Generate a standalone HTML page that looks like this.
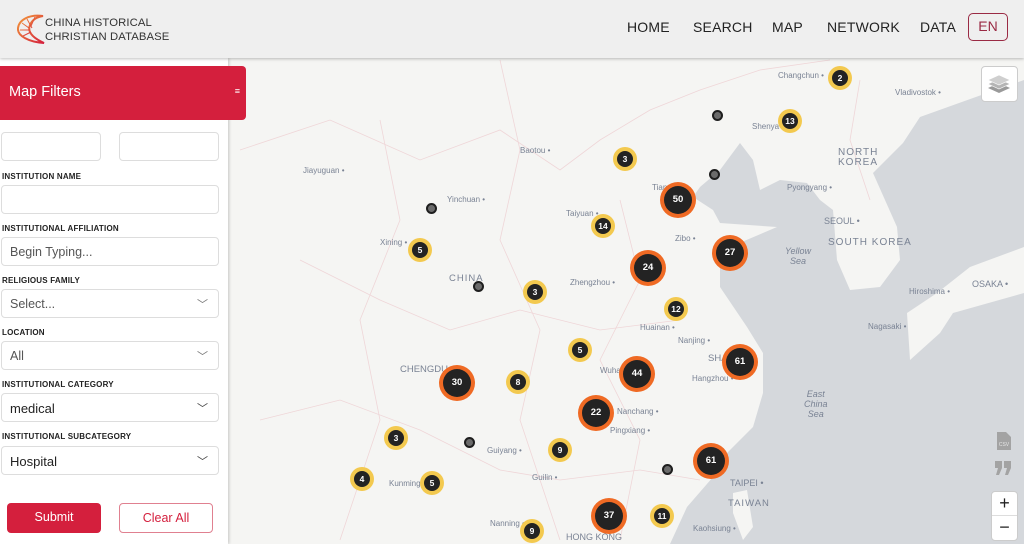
<!DOCTYPE html>
<html><head><meta charset="utf-8"><style>
*{box-sizing:border-box;margin:0;padding:0}
body{width:1024px;height:544px;overflow:hidden;font-family:"Liberation Sans",sans-serif;background:#f5f5f3;position:relative}
.top{position:absolute;left:0;top:0;width:1024px;height:58px;background:#efefef;box-shadow:0 1px 3px rgba(0,0,0,.25);z-index:5}
.logo{position:absolute;left:45px;top:16px;font-size:11.3px;line-height:14px;color:#333;letter-spacing:.1px}
.nav{position:absolute;top:19px;font-size:14px;color:#222;letter-spacing:.2px}
.en{position:absolute;left:968px;top:13px;width:40px;height:28px;border:1.5px solid #9a2a44;border-radius:5px;color:#9a2a44;font-size:14px;text-align:center;line-height:25px}
.side{position:absolute;left:0;top:58px;width:228px;height:486px;background:#fff;box-shadow:1px 0 3px rgba(0,0,0,.2);z-index:3}
.hdr{position:absolute;left:0;top:66px;width:246px;height:54px;background:#d41f3d;border-radius:0 4px 4px 0;color:#fff;font-size:14.5px;padding:18px 9px;z-index:4}
.inp{position:absolute;height:29px;border:1px solid #ddd;border-radius:4px;background:#fff;font-size:12.5px;color:#555;padding:7px 8px}
.lbl{position:absolute;left:2px;font-size:8px;font-weight:bold;color:#222;letter-spacing:.2px}
.chev{position:absolute;right:10px;top:6px;color:#777;font-size:11px}
.btn{position:absolute;top:503px;height:30px;border-radius:4px;font-size:12.5px;text-align:center;line-height:29px}
.lb{position:absolute;font-size:8px;color:#7a8394}
.m{position:absolute;border-radius:50%;color:#fff;font-size:8.5px;font-weight:bold;text-align:center}
.y{width:24px;height:24px;background:#f3c94f;padding:4px}
.o{width:36px;height:36px;background:#ef6a24;padding:4px}
.m span{display:block;width:100%;height:100%;border-radius:50%;background:#232323}
.y span{line-height:16px}.o span{line-height:28px;font-size:9.5px}
.g{position:absolute;width:11px;height:11px;border-radius:50%;background:#6b6b6b;border:2px solid #1e1e1e}
</style></head><body>
<svg style="position:absolute;left:0;top:0" width="1024" height="544">
<path fill="#d5d8dc" d="M973,98 L920,117 903,143 873,173 897,227 900,260 880,287 850,290 837,260 833,210 820,200 807,183 780,180 760,190 753,160 740,143 720,170 700,187 693,197 713,210 720,223 777,227 730,247 720,267 720,287 747,327 763,353 763,393 753,427 727,453 713,477 687,507 670,544 1024,544 1024,80 Z"/>
<path fill="#f5f5f3" d="M1024,247 L970,267 937,293 907,313 910,360 940,333 953,313 1024,293 Z"/>
<path fill="#f5f5f3" d="M733,493 L747,490 753,527 743,540 733,513 Z"/>
<g fill="none" stroke="#efd6d8" stroke-width="0.8">
<path d="M240,150 L330,120 420,160 500,130 560,170 600,140 650,110 700,90 760,70 830,60"/>
<path d="M300,260 L380,300 450,330 520,310 600,330 680,320"/>
<path d="M260,420 L340,400 420,430 500,470 560,480 640,470 700,480"/>
<path d="M500,60 L520,150 500,240 540,330 520,420 560,540"/>
<path d="M380,120 L400,220 360,320 380,420 340,540"/>
<path d="M620,200 L640,280 600,360 640,440 620,540"/>
<path d="M860,80 L850,140 870,200"/>
</g></svg>
<div class="lb" style="left:778px;top:71px">Changchun •</div>
<div class="lb" style="left:895px;top:88px">Vladivostok •</div>
<div class="lb" style="left:752px;top:122px">Shenya</div>
<div class="lb" style="left:520px;top:146px">Baotou •</div>
<div class="lb" style="left:303px;top:166px">Jiayuguan •</div>
<div class="lb" style="left:447px;top:195px">Yinchuan •</div>
<div class="lb" style="left:566px;top:209px">Taiyuan •</div>
<div class="lb" style="left:652px;top:183px">Tian</div>
<div class="lb" style="left:675px;top:234px">Zibo •</div>
<div class="lb" style="left:380px;top:238px">Xining •</div>
<div class="lb" style="left:449px;top:273px;font-size:9.5px;letter-spacing:1px">CHINA</div>
<div class="lb" style="left:570px;top:278px">Zhengzhou •</div>
<div class="lb" style="left:640px;top:323px">Huainan •</div>
<div class="lb" style="left:678px;top:336px">Nanjing •</div>
<div class="lb" style="left:708px;top:353px;font-size:9.5px">SHA</div>
<div class="lb" style="left:692px;top:374px">Hangzhou •</div>
<div class="lb" style="left:400px;top:364px;font-size:9.5px">CHENGDU</div>
<div class="lb" style="left:600px;top:366px">Wuha</div>
<div class="lb" style="left:617px;top:407px">Nanchang •</div>
<div class="lb" style="left:610px;top:426px">Pingxiang •</div>
<div class="lb" style="left:487px;top:446px">Guiyang •</div>
<div class="lb" style="left:532px;top:473px">Guilin •</div>
<div class="lb" style="left:389px;top:479px">Kunming •</div>
<div class="lb" style="left:490px;top:519px">Nanning •</div>
<div class="lb" style="left:566px;top:532px;font-size:9px">HONG KONG</div>
<div class="lb" style="left:838px;top:148px;font-size:10px;letter-spacing:1px;line-height:10px">NORTH<br>KOREA</div>
<div class="lb" style="left:787px;top:183px">Pyongyang •</div>
<div class="lb" style="left:824px;top:216px;font-size:9px">SEOUL •</div>
<div class="lb" style="left:828px;top:237px;font-size:10px;letter-spacing:1px">SOUTH KOREA</div>
<div class="lb" style="left:785px;top:246px;font-size:9px;font-style:italic;text-align:center;line-height:10px">Yellow<br>Sea</div>
<div class="lb" style="left:909px;top:287px">Hiroshima •</div>
<div class="lb" style="left:972px;top:279px;font-size:9px">OSAKA •</div>
<div class="lb" style="left:868px;top:322px">Nagasaki •</div>
<div class="lb" style="left:804px;top:389px;font-size:9px;font-style:italic;text-align:center;line-height:10px">East<br>China<br>Sea</div>
<div class="lb" style="left:730px;top:478px;font-size:9px">TAIPEI •</div>
<div class="lb" style="left:728px;top:498px;font-size:9.5px;letter-spacing:1px">TAIWAN</div>
<div class="lb" style="left:693px;top:524px">Kaohsiung •</div>
<div class="m y" style="left:828px;top:66px"><span>2</span></div>
<div class="m y" style="left:778px;top:109px"><span>13</span></div>
<div class="m y" style="left:613px;top:147px"><span>3</span></div>
<div class="m y" style="left:591px;top:214px"><span>14</span></div>
<div class="m y" style="left:408px;top:238px"><span>5</span></div>
<div class="m y" style="left:523px;top:280px"><span>3</span></div>
<div class="m y" style="left:664px;top:297px"><span>12</span></div>
<div class="m y" style="left:568px;top:338px"><span>5</span></div>
<div class="m y" style="left:506px;top:370px"><span>8</span></div>
<div class="m y" style="left:384px;top:426px"><span>3</span></div>
<div class="m y" style="left:548px;top:438px"><span>9</span></div>
<div class="m y" style="left:350px;top:467px"><span>4</span></div>
<div class="m y" style="left:420px;top:471px"><span>5</span></div>
<div class="m y" style="left:650px;top:504px"><span>11</span></div>
<div class="m y" style="left:520px;top:519px"><span>9</span></div>
<div class="m o" style="left:660px;top:182px"><span>50</span></div>
<div class="m o" style="left:712px;top:235px"><span>27</span></div>
<div class="m o" style="left:630px;top:250px"><span>24</span></div>
<div class="m o" style="left:439px;top:365px"><span>30</span></div>
<div class="m o" style="left:619px;top:356px"><span>44</span></div>
<div class="m o" style="left:722px;top:344px"><span>61</span></div>
<div class="m o" style="left:578px;top:395px"><span>22</span></div>
<div class="m o" style="left:693px;top:443px"><span>61</span></div>
<div class="m o" style="left:591px;top:498px"><span>37</span></div>
<div class="g" style="left:712px;top:110px"></div>
<div class="g" style="left:709px;top:169px"></div>
<div class="g" style="left:426px;top:203px"></div>
<div class="g" style="left:473px;top:281px"></div>
<div class="g" style="left:464px;top:437px"></div>
<div class="g" style="left:662px;top:464px"></div>
<div style="position:absolute;left:981px;top:66px;width:37px;height:36px;background:#fff;border:1.5px solid #ccc;border-radius:4px">
<svg width="34" height="33" viewBox="0 0 34 33"><path d="M6,21 L17,26 28,21 17,16Z" fill="#9a9a9a"/><path d="M6,17 L17,22 28,17 17,12Z" fill="#b5b5b5" stroke="#fff" stroke-width=".6"/><path d="M6,13 L17,18 28,13 17,8Z" fill="#cfcfcf" stroke="#fff" stroke-width=".6"/></svg></div>
<svg style="position:absolute;left:996px;top:432px" width="16" height="18"><path d="M1,0 H10 L15,5 V18 H1Z" fill="#a3a3a3"/><text x="8" y="14" font-size="5" fill="#e6e6e6" text-anchor="middle" font-family="Liberation Sans">CSV</text></svg>
<svg style="position:absolute;left:995px;top:461px" width="17" height="14" viewBox="0 0 17 14"><path d="M0,0 H7 V7 L4,14 H1 L3,7 H0Z M9,0 H16 V7 L13,14 H10 L12,7 H9Z" fill="#a3a3a3"/></svg>
<div style="position:absolute;left:991px;top:491px;width:27px;height:50px;background:#fff;border:1.5px solid #ccc;border-radius:4px;text-align:center;font-size:18px;color:#222;line-height:23px">+<div style="border-top:1px solid #ddd">−</div></div>
<div class="top">
<svg style="position:absolute;left:17px;top:14px" width="28" height="30" viewBox="0 0 28 30"><defs><linearGradient id="lg" x1="0" y1="0" x2="1" y2="1"><stop offset="0" stop-color="#f39a3a"/><stop offset="1" stop-color="#d41f3d"/></linearGradient></defs><path d="M26,2 C12,0 2,6 1,14 C0,22 12,28 27,29 C16,24 10,18 13,11 C15,6 20,3 26,2Z" fill="none" stroke="url(#lg)" stroke-width="2"/><path d="M5,9 L12,14 M3,16 L13,16 M6,22 L14,18 M10,5 L15,14 M18,3 L14,12" stroke="url(#lg)" stroke-width="1"/></svg>
<div class="logo">CHINA HISTORICAL<br>CHRISTIAN DATABASE</div>
<div class="nav" style="left:627px">HOME</div>
<div class="nav" style="left:693px">SEARCH</div>
<div class="nav" style="left:772px">MAP</div>
<div class="nav" style="left:827px">NETWORK</div>
<div class="nav" style="left:920px">DATA</div>
<div class="en">EN</div>
</div>
<div class="side">
<div class="inp" style="left:1px;top:74px;width:100px"></div>
<div class="inp" style="left:119px;top:74px;width:100px"></div>
<div class="lbl" style="top:114px">INSTITUTION NAME</div>
<div class="inp" style="left:1px;top:127px;width:218px"></div>
<div class="lbl" style="top:166px">INSTITUTIONAL AFFILIATION</div>
<div class="inp" style="left:1px;top:179px;width:218px">Begin Typing...</div>
<div class="lbl" style="top:218px">RELIGIOUS FAMILY</div>
<div class="inp" style="left:1px;top:231px;width:218px">Select...<span class="chev">﹀</span></div>
<div class="lbl" style="top:270px">LOCATION</div>
<div class="inp" style="left:1px;top:283px;width:218px">All<span class="chev">﹀</span></div>
<div class="lbl" style="top:322px">INSTITUTIONAL CATEGORY</div>
<div class="inp" style="left:1px;top:335px;width:218px;color:#222;font-size:13px">medical<span class="chev" style="color:#444">﹀</span></div>
<div class="lbl" style="top:374px">INSTITUTIONAL SUBCATEGORY</div>
<div class="inp" style="left:1px;top:388px;width:218px;color:#222;font-size:13px">Hospital<span class="chev" style="color:#444">﹀</span></div>
</div>
<div class="hdr">Map Filters<span style="position:absolute;right:6px;top:20px;font-size:9px">≡</span></div>
<div class="btn" style="left:7px;width:94px;background:#d41f3d;color:#fff;z-index:4">Submit</div>
<div class="btn" style="left:119px;width:94px;border:1px solid #e08090;color:#d41f3d;background:#fff;z-index:4">Clear All</div>
</body></html>
